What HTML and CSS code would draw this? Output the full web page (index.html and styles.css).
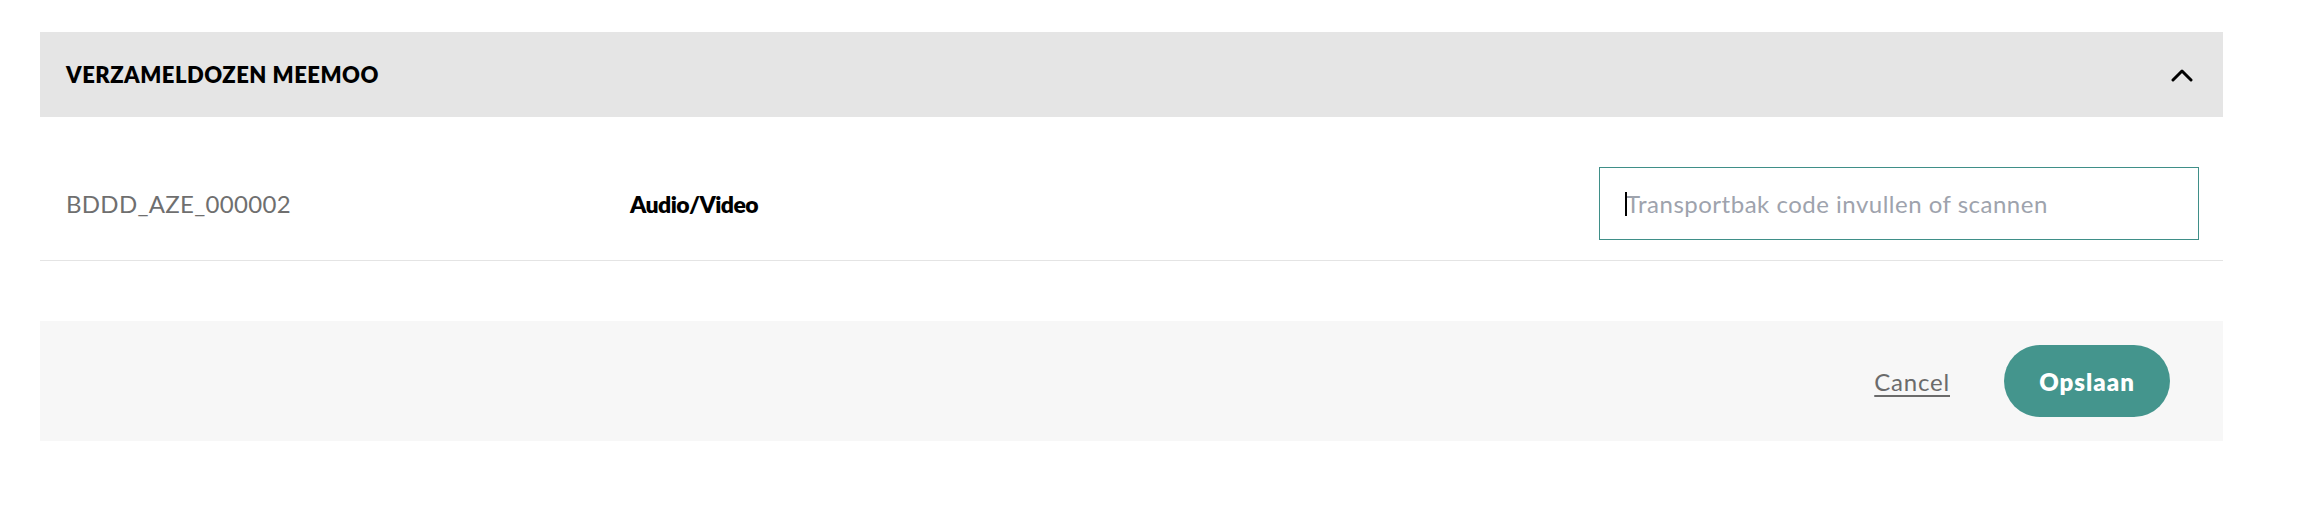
FILE: index.html
```html
<!DOCTYPE html>
<html lang="nl">
<head>
<meta charset="utf-8">
<title>Verzameldozen meemoo</title>
<link rel="stylesheet" href="styles.css">
</head>
<body>
<div class="panel">
  <div class="accordion-header">
    <h2 class="accordion-title">VERZAMELDOZEN MEEMOO</h2>
    <svg class="chevron" width="22" height="14" viewBox="0 0 22 14" aria-hidden="true">
      <polyline points="2,12 11,3 20,12" fill="none" stroke="#000" stroke-width="3" stroke-linecap="round" stroke-linejoin="round"/>
    </svg>
  </div>
  <div class="row">
    <span class="code">BDDD_AZE_000002</span>
    <span class="type">Audio/Video</span>
    <div class="field"><span class="caret"></span><input class="input" type="text" placeholder="Transportbak code invullen of scannen"></div>
  </div>
  <div class="footer">
    <a class="cancel" href="#">Cancel</a>
    <button class="save" type="button">Opslaan</button>
  </div>
</div>
</body>
</html>
```
FILE: styles.css
```css
html, body {
  margin: 0;
  padding: 0;
  background: #ffffff;
}
body {
  font-family: Lato, "Noto Sans", sans-serif;
  color: #000;
}
.panel {
  width: 2183px;
  margin-left: 40px;
  padding-top: 32px;
}
.accordion-header {
  height: 85px;
  background: #e5e5e5;
  display: flex;
  align-items: center;
  justify-content: space-between;
  padding: 0 30px 0 26px;
  box-sizing: border-box;
}
.accordion-title {
  margin: 0;
  font-size: 22px;
  font-weight: 800;
  letter-spacing: 0.5px;
}
.chevron {
  display: block;
}
.row {
  display: grid;
  grid-template-columns: 564px 1fr 600px;
  align-items: center;
  padding: 50px 24px 20px 26px;
  border-bottom: 1px solid #e4e4e4;
}
.code {
  font-size: 24px;
  letter-spacing: 0.3px;
  color: #6f6f6f;
}
.type {
  font-size: 23px;
  font-weight: 800;
  letter-spacing: -0.6px;
}
.field {
  position: relative;
  height: 73px;
  box-sizing: border-box;
  border: 1.5px solid #3f8f88;
  display: flex;
  align-items: center;
}
.input {
  border: 0;
  outline: none;
  background: transparent;
  width: 100%;
  height: 100%;
  padding: 0 0 0 26px;
  font-family: Lato, "Noto Sans", sans-serif;
  font-size: 24px;
  letter-spacing: 0.5px;
  color: #000;
}
.input::placeholder {
  color: #9ea3ad;
}
.caret {
  position: absolute;
  left: 25px;
  top: 24px;
  width: 2px;
  height: 24px;
  background: #000;
}
.footer {
  margin-top: 60px;
  height: 120px;
  background: #f7f7f7;
  display: flex;
  align-items: center;
  justify-content: flex-end;
  gap: 54px;
  padding-right: 53px;
}
.cancel {
  font-size: 24px;
  letter-spacing: 0.8px;
  color: #6b6b6b;
  text-decoration: underline;
  text-underline-offset: 4px;
  text-decoration-thickness: 2px;
}
.save {
  width: 166px;
  height: 72px;
  border: 0;
  border-radius: 36px;
  background: #44958d;
  color: #fff;
  font-family: Lato, "Noto Sans", sans-serif;
  font-size: 24px;
  font-weight: 800;
  letter-spacing: 1px;
  cursor: pointer;
}
```
